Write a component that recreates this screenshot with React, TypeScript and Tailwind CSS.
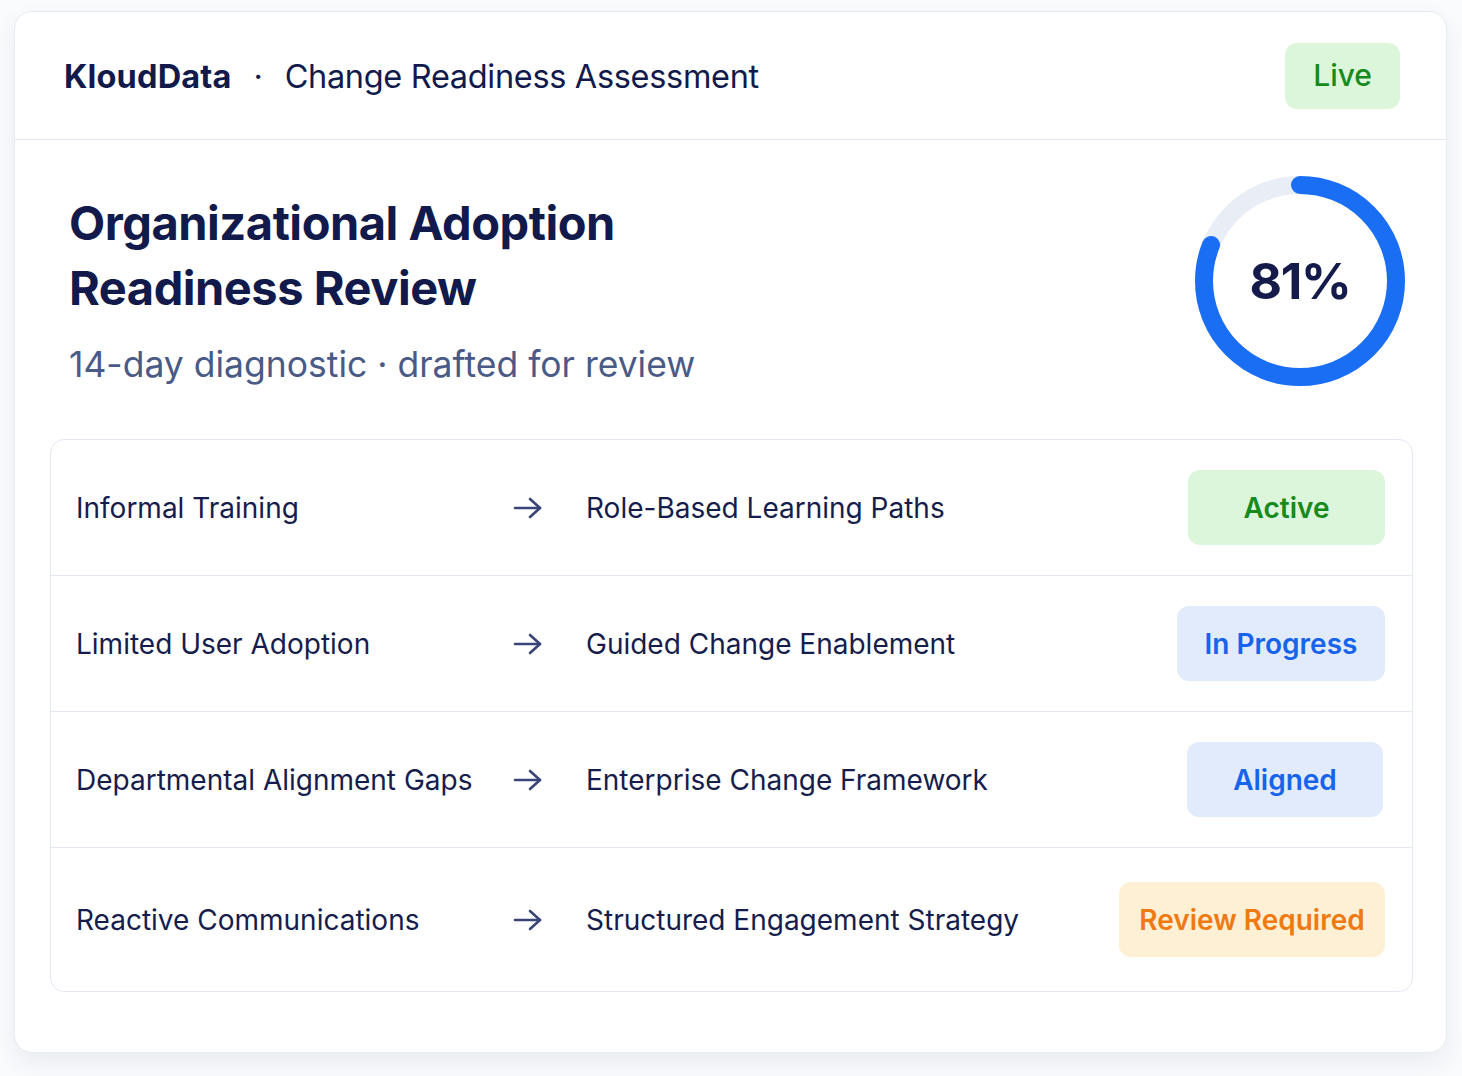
import React from 'react';

interface Row {
    from: string;
    to: string;
    status: 'active' | 'progress' | 'aligned' | 'review';
}

const rows: Row[] = [
    { from: 'Informal Training', to: 'Role-Based Learning Paths', status: 'active' },
    { from: 'Limited User Adoption', to: 'Guided Change Enablement', status: 'progress' },
    { from: 'Departmental Alignment Gaps', to: 'Enterprise Change Framework', status: 'aligned' },
    { from: 'Reactive Communications', to: 'Structured Engagement Strategy', status: 'review' },
];

const statusConfig = {
    active: { label: 'Active', cls: 'w-[197px] bg-[#dcf6dc] text-[#178a1c]' },
    progress: { label: 'In Progress', cls: 'w-[208px] bg-[#e1ebfb] text-[#1763ec]' },
    aligned: { label: 'Aligned', cls: 'w-[196px] mr-[2px] bg-[#e1ebfb] text-[#1763ec]' },
    review: { label: 'Review Required', cls: 'w-[266px] bg-[#fdf0d4] text-[#f07a12]' },
};

function Arrow() {
    return (
        <svg width="32" height="24" viewBox="0 0 32 24" fill="none" stroke="#3a4577" strokeWidth={2.6} strokeLinecap="round" strokeLinejoin="round">
            <path d="M3 12h25" />
            <path d="M18 3l10 9-10 9" />
        </svg>
    );
}

function Ring({ value }: { value: number }) {
    const r = 96;
    const c = 2 * Math.PI * r;
    return (
        <div className="relative w-[230px] h-[230px] -mr-[2px] -mt-[2px]">
            <svg width="230" height="230" viewBox="0 0 230 230">
                <circle cx="115" cy="115" r={r} fill="none" stroke="#e9eef6" strokeWidth={18} />
                <circle
                    cx="115"
                    cy="115"
                    r={r}
                    fill="none"
                    stroke="#1a6ef4"
                    strokeWidth={18}
                    strokeLinecap="round"
                    strokeDasharray={`${(c * value) / 100} ${c}`}
                    transform="rotate(-90 115 115)"
                />
            </svg>
            <div className="absolute inset-0 flex items-center justify-center text-[50px] font-bold text-[#141b4b] tracking-tight">
                {value}%
            </div>
        </div>
    );
}

export default function App() {
    return (
        <div className="min-h-screen bg-[#fafbfd] pt-[11px] pl-[14px]" style={{ fontFamily: 'Inter, "Noto Sans", sans-serif' }}>
            <div className="w-[1433px] h-[1042px] bg-white rounded-[18px] border border-[#e7ebf2] shadow-[0_10px_24px_rgba(30,45,90,0.08)] flex flex-col">
                {/* Header */}
                <div className="h-[128px] shrink-0 flex items-center justify-between pl-[49px] pr-[46px] border-b border-[#e4e9f1]">
                    <div className="flex items-center text-[32.5px] text-[#121a4c] tracking-[-0.01em] pt-[3px]">
                        <span className="font-bold tracking-[0.005em]">KloudData</span>
                        <span className="mx-[22px]">·</span>
                        <span>Change Readiness Assessment</span>
                    </div>
                    <div className="h-[66px] px-[28px] rounded-[12px] bg-[#dcf6dc] text-[#178a1c] text-[30px] font-medium flex items-center">
                        Live
                    </div>
                </div>

                {/* Body */}
                <div className="flex-1 pl-[35px] pr-[33px] pt-[28px]">
                    <div className="flex justify-between items-start pl-[21px]">
                        <div className="pt-[22px]">
                            <h1 className="text-[47px] leading-[65px] font-bold text-[#121a4c] tracking-[-0.01em] -ml-[2px]">
                                Organizational Adoption
                                <br />
                                Readiness Review
                            </h1>
                            <p className="mt-[18px] text-[35.5px] text-[#4a5a86] -ml-[2px]">
                                14-day diagnostic · drafted for review
                            </p>
                        </div>
                        <Ring value={81} />
                    </div>

                    {/* Table */}
                    <div className="mt-[43px] border border-[#e3e8f1] rounded-[14px] overflow-hidden">
                        {rows.map((row, i) => {
                            const cfg = statusConfig[row.status];
                            return (
                                <div
                                    key={row.from}
                                    className={`flex items-center pl-[25px] pr-[27px] ${i === rows.length - 1 ? 'h-[143px]' : 'h-[136px] border-b border-[#e3e8f1]'}`}
                                >
                                    <div className="w-[436px] text-[28px] text-[#161d4c]">{row.from}</div>
                                    <div className="w-[74px]">
                                        <Arrow />
                                    </div>
                                    <div className="flex-1 text-[28px] text-[#161d4c]">{row.to}</div>
                                    <div className={`h-[75px] shrink-0 rounded-[12px] flex items-center justify-center text-[28px] font-semibold ${cfg.cls}`}>
                                        {cfg.label}
                                    </div>
                                </div>
                            );
                        })}
                    </div>
                </div>
            </div>
        </div>
    );
}
